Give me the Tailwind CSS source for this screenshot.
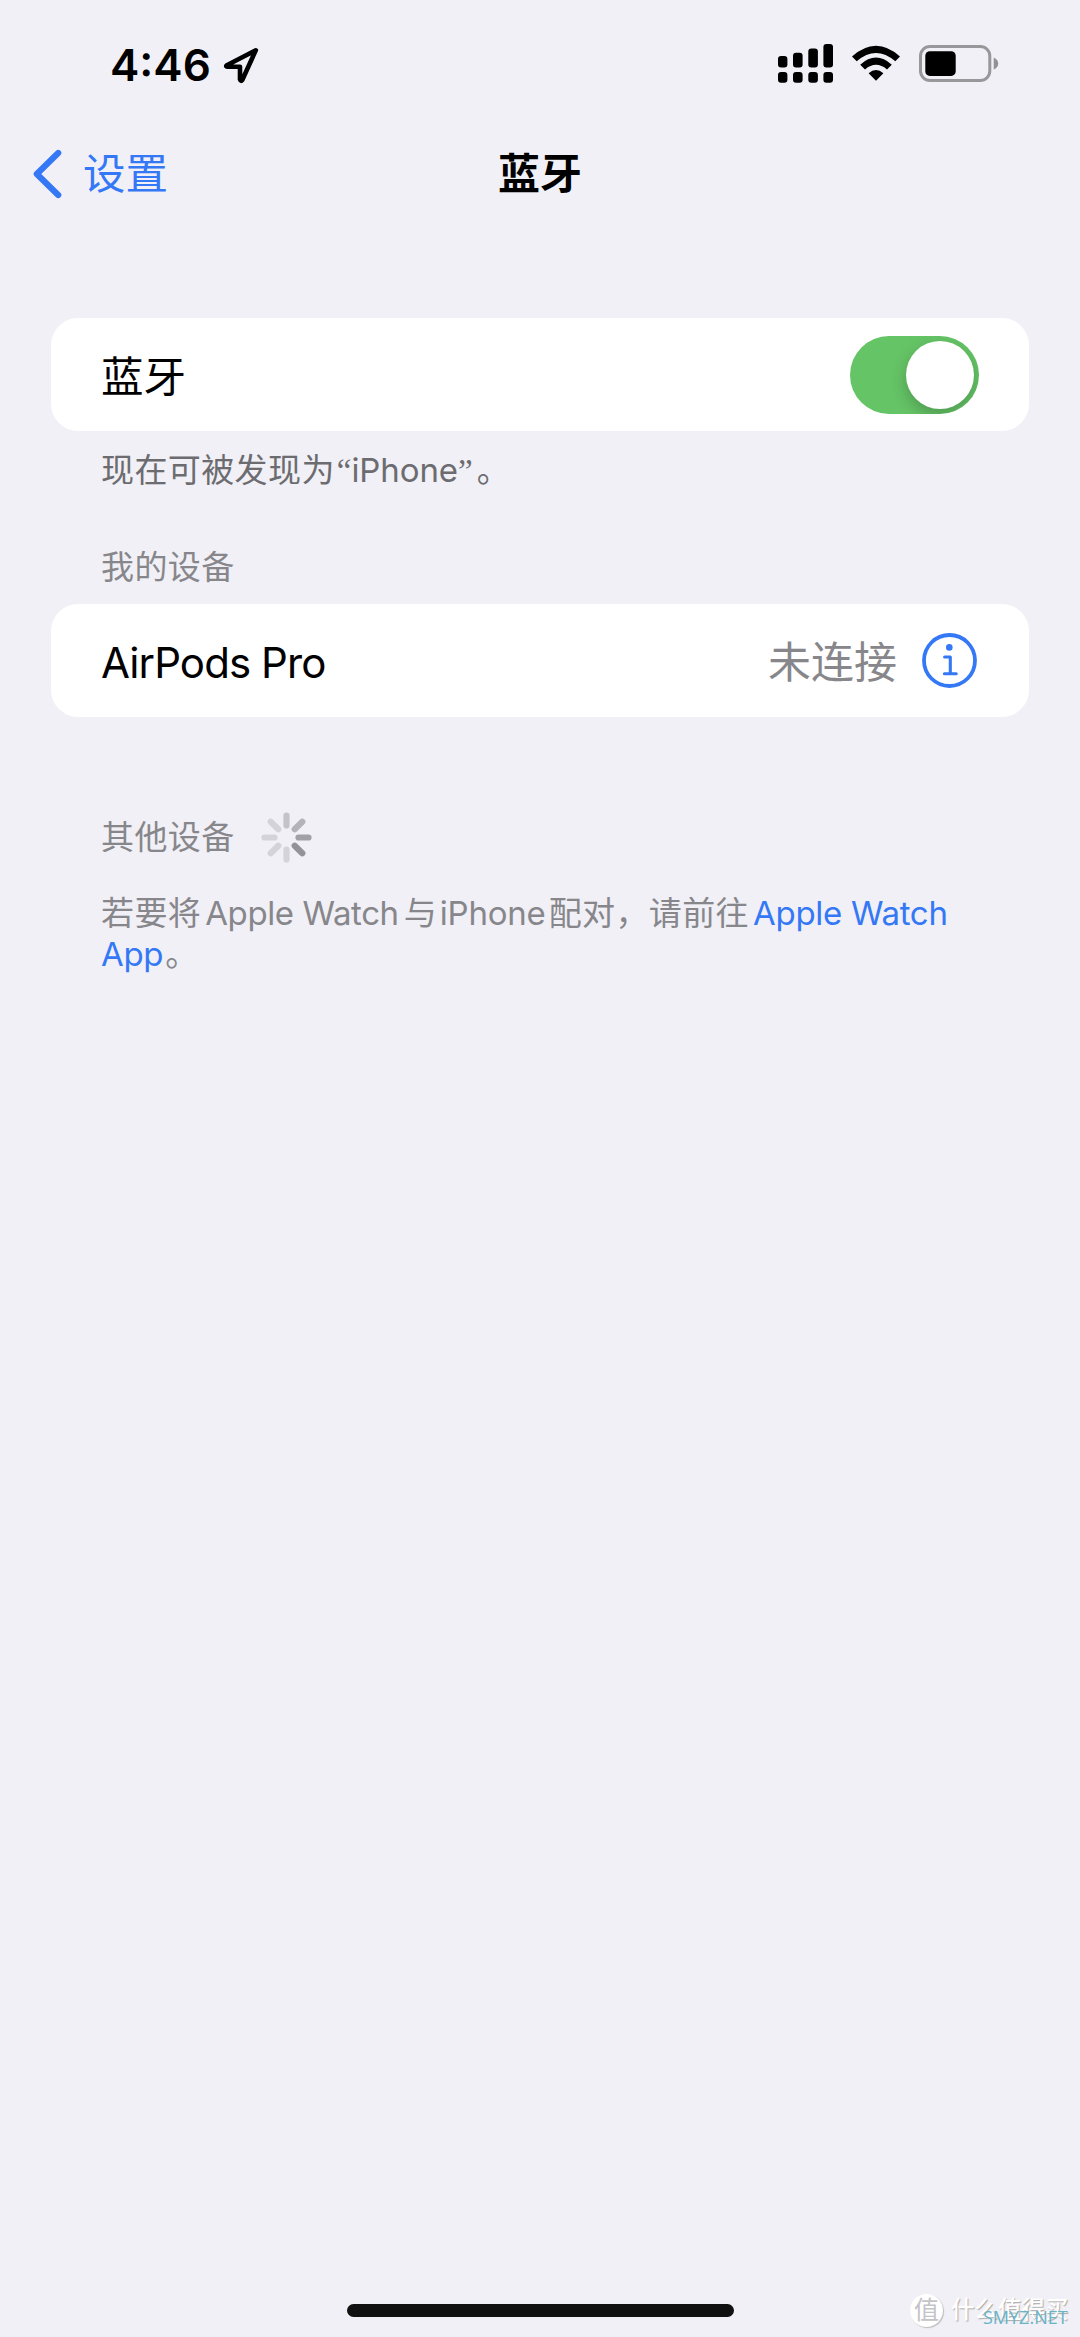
<!DOCTYPE html>
<html lang="zh-CN">
<head>
<meta charset="utf-8">
<title>蓝牙</title>
<script src="https://cdn.jsdelivr.net/npm/@tailwindcss/browser@4"></script>
</head>
<body class="bg-[#f1f0f6]">
<main class="relative flex h-[2337px] w-[1080px] flex-col overflow-hidden bg-[#f1f0f6] font-['Inter','Noto_Sans_CJK_SC',sans-serif] text-black">
  <!-- Status bar -->
  <header class="flex h-[130px] items-start justify-between pt-[38px] pr-[81px] pl-[110px]">
    <div class="flex h-[54px] items-center gap-[12px]">
      <span class="text-[44px] leading-[54px] font-semibold">4:46</span>
      <svg class="h-[38px] w-[38px]" viewBox="0 0 38 38" fill="none" stroke="#000" stroke-width="4.6" stroke-linejoin="round"><path d="M32.8 4.3 3.8 19.2Q2.3 20.7 4.5 20.8H17V33.5Q17.7 36 19.4 33.8Z"/></svg>
    </div>
    <div class="flex h-[54px] items-start pt-[5px]">
      <svg class="h-[44px] w-[222px]" viewBox="777 43 222 44">
        <g fill="#000">
          <rect x="778" y="56" width="9.4" height="11.5" rx="3"/><rect x="793" y="52.7" width="9.6" height="14.8" rx="3"/><rect x="808.3" y="48.5" width="9.6" height="19" rx="3"/><rect x="823.4" y="44" width="9.6" height="23.5" rx="3"/>
          <rect x="778" y="72" width="9.4" height="10.8" rx="3"/><rect x="793" y="72" width="9.6" height="10.8" rx="3"/><rect x="808.3" y="72" width="9.6" height="10.8" rx="3"/><rect x="823.4" y="72" width="9.6" height="10.8" rx="3"/>
          <path d="M852 56.4Q876 35 900 56.4L895.3 61.2Q876 44.6 856.7 61.2ZM860.2 64.7Q876 50.5 891.8 64.7L887 69.5Q876 60.2 865 69.5ZM868.6 73.2Q876 67 883.4 73.2L876 80.8Z"/>
          <rect x="925.3" y="51.3" width="30.4" height="24.6" rx="4.5"/>
        </g>
        <rect x="920.5" y="46.5" width="69.3" height="34" rx="9.5" fill="none" stroke="#98989b" stroke-width="3"/>
        <path d="M993.7 57.5Q998.2 59.5 998.2 63.5T993.7 69.5Z" fill="#929295"/>
      </svg>
    </div>
  </header>

  <!-- Navigation bar -->
  <nav class="grid h-[88px] grid-cols-3 items-center pr-[32px] pl-[32px] text-[42.5px] leading-[88px]">
    <a class="flex items-center gap-[20px] text-[#3478f6]">
      <svg class="h-[50px] w-[31px]" viewBox="0 0 31 50" fill="none" stroke="#3478f6" stroke-width="6.2" stroke-linecap="round" stroke-linejoin="round"><path d="M26.2 4 4.8 25 26.2 46"/></svg>
      <span>设置</span>
    </a>
    <h1 class="text-center text-[42px] font-bold">蓝牙</h1>
  </nav>

  <!-- Bluetooth switch -->
  <section class="mx-[51px] mt-[100px] flex h-[113px] items-center justify-between rounded-[27px] bg-white pr-[50px] pl-[50px]">
    <span class="pt-[4px] text-[42.5px]">蓝牙</span>
    <div class="flex h-[78px] w-[129px] items-center justify-end overflow-hidden rounded-full bg-[#65c466] pr-[5px]">
      <div class="h-[68px] w-[68px] rounded-full bg-white shadow-[0_6px_16px_rgba(0,0,0,0.22)]"></div>
    </div>
  </section>
  <p class="mt-[19px] h-[40px] pl-[101px] text-[33px] leading-[40px] text-[#6c6c70]"><span class="tracking-[0.4px]">现在可被发现为</span><span class="ml-[2px] font-['Liberation_Serif']">“</span><span class="tracking-[-0.1px]">iPhone</span><span class="font-['Liberation_Serif']">”</span><span class="ml-[4px]">。</span></p>

  <!-- My devices -->
  <h2 class="mt-[57px] h-[40px] pl-[101px] text-[33px] leading-[40px] tracking-[0.4px] text-[#87878b]">我的设备</h2>
  <section class="mx-[51px] mt-[17px] flex h-[113px] items-center justify-between rounded-[27px] bg-white pr-[52px] pl-[50px]">
    <span class="pt-[3px] text-[42px] tracking-[-0.9px]">AirPods Pro</span>
    <div class="flex items-center gap-[25px]">
      <span class="pt-[4px] text-[43px] text-[#87878b]">未连接</span>
      <svg class="h-[55px] w-[55px]" viewBox="0 0 55 55" fill="none" stroke="#3478f6"><circle cx="27.5" cy="27.5" r="25.5" stroke-width="3.8"/><circle cx="27.3" cy="14.4" r="3.3" fill="#3478f6" stroke="none"/><path d="M22.6 24H28.3V40.7M22.4 40.7H34.2" stroke-width="3.1" stroke-linecap="round" stroke-linejoin="round"/></svg>
    </div>
  </section>

  <!-- Other devices -->
  <div class="mt-[95px] flex h-[50px] items-center gap-[26px] pl-[101px] text-[33px] leading-[40px] text-[#87878b]">
    <h2 class="tracking-[0.4px]">其他设备</h2>
    <svg class="h-[51px] w-[51px]" viewBox="-25.5 -25.5 51 51" stroke-width="6.2" stroke-linecap="round">
      <path d="M0-12V-22" stroke="#c3c3c8"/><path d="M8.2-8.2 15.8-15.8" stroke="#b3b3b8"/><path d="M12 0H22" stroke="#a0a0a5"/><path d="M8.2 8.2 15.8 15.8" stroke="#929297"/><path d="M0 12V22M-8.2 8.2-15.8 15.8M-12 0H-22M-8.2-8.2-15.8-15.8" stroke="#d3d3d8"/>
    </svg>
  </div>
  <div class="mt-[31px] pl-[101px] text-[33px] leading-[41px] text-[#87878b]">
    <p class="whitespace-nowrap"><span class="tracking-[0.4px]">若要将</span><span class="ml-[4px] tracking-[-0.4px]">Apple Watch</span><span class="mr-[3px] ml-[5px]">与</span><span class="tracking-[-0.2px]">iPhone</span><span class="ml-[3px] tracking-[0.4px]">配对，请前往</span><a class="ml-[4px] tracking-[-0.3px] text-[#3478f6]">Apple Watch</a></p>
    <p><a class="tracking-[-0.3px] text-[#3478f6]">App</a><span class="ml-[2px]">。</span></p>
  </div>

  <!-- Home indicator -->
  <div class="mt-auto mb-[20px] ml-[347px] h-[13px] w-[387px] rounded-full bg-[#111]"></div>

  <!-- Watermark -->
  <div class="absolute top-[2293px] left-[910px] flex h-[34px] items-center gap-[8px] text-white">
    <span class="flex h-[33px] w-[33px] items-center justify-center rounded-full bg-white text-[25px] leading-none text-[#c4c4c8] shadow-[1px_1px_1px_#bbb]">值</span>
    <span class="text-[23.5px] leading-[34px] font-medium [text-shadow:1px_1px_1px_#aaa]">什么值得买</span>
  </div>
  <div class="absolute top-[2305px] left-[983px] font-['Open_Sans'] text-[18px] leading-[24px] font-medium text-[#68b3c5]">SMYZ.NET</div>
</main>
</body>
</html>
